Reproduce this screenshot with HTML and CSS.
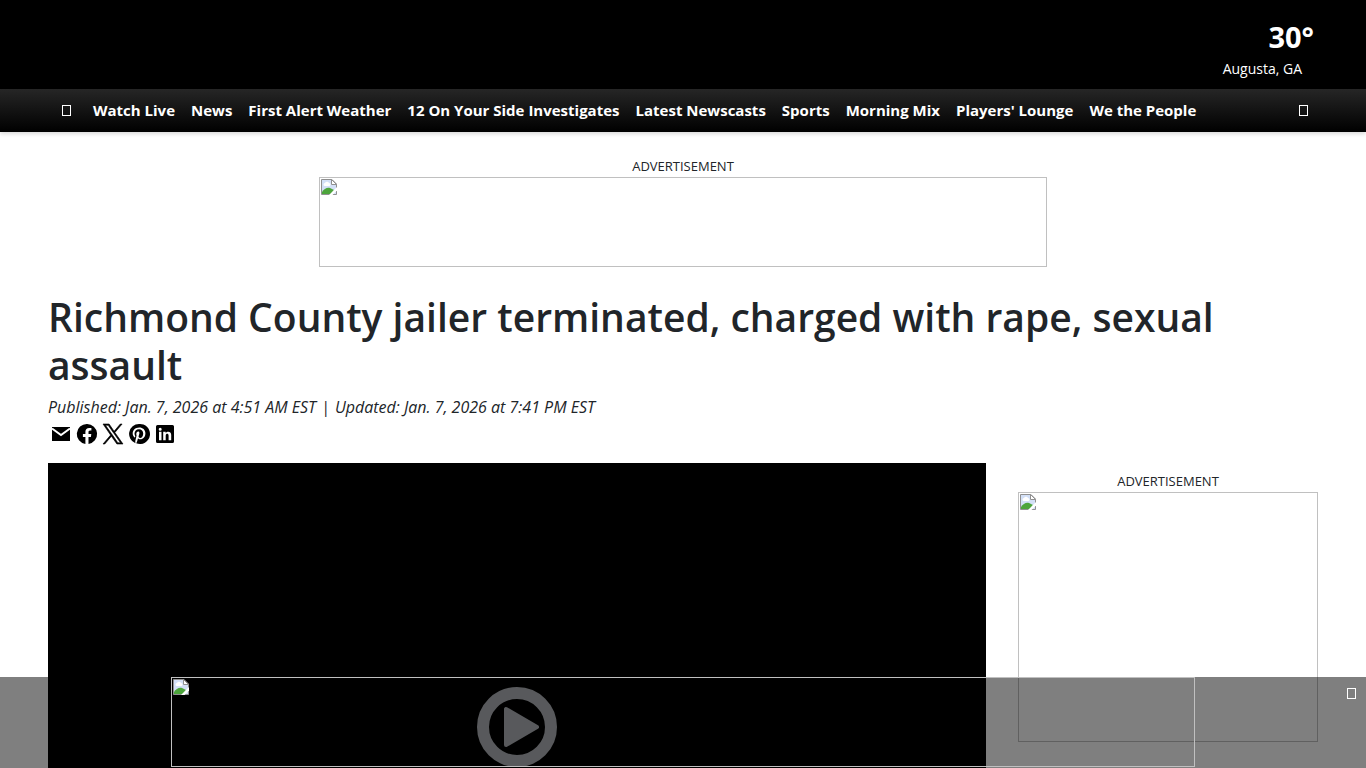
FILE: index.html
```
<!DOCTYPE html>
<html lang="en">
<head>
    <meta charset="UTF-8">
    <meta name="viewport" content="width=device-width, initial-scale=1.0">
    <title>Richmond County jailer terminated, charged with rape, sexual assault</title>
    <link rel="stylesheet" href="styles.css">
</head>
<body>
    <!-- Shared placeholder icon for ad slots -->
    <svg class="sprite" aria-hidden="true">
        <symbol id="broken" viewBox="0 0 16 16">
            <path d="M.5.5h10.500l4.500 4.500v10.500H.5z" fill="#d3e0f7"/>
            <path d="M4 7a1.500 1.500 0 0 1 0-3 2.200 2.200 0 0 1 4 0 1.500 1.500 0 0 1 0 3z" fill="#fff"/>
            <path d="M1 15v-2c2-3 5-5 8-4l4 2-3 4z" fill="#4da53c"/>
            <path d="M.5 15.500V.5h10.500l4.500 4.500v10.500z" fill="none" stroke="#909090"/>
            <path d="M10.500.5v5h5z" fill="#fff" stroke="#909090"/>
            <path d="M8 16l8-8v3.500L11.500 16z" fill="#fff"/>
        </symbol>
    </svg>

    <header class="masthead">
        <div class="weather">
            <div class="temp">30°</div>
            <div class="city">Augusta, GA</div>
        </div>
    </header>

    <nav class="navbar">
        <button class="icon-btn" aria-label="Menu"><span class="glyph"></span></button>
        <ul class="nav-links">
            <li><a href="#">Watch Live</a></li>
            <li><a href="#">News</a></li>
            <li><a href="#">First Alert Weather</a></li>
            <li><a href="#">12 On Your Side Investigates</a></li>
            <li><a href="#">Latest Newscasts</a></li>
            <li><a href="#">Sports</a></li>
            <li><a href="#">Morning Mix</a></li>
            <li><a href="#">Players' Lounge</a></li>
            <li><a href="#">We the People</a></li>
        </ul>
        <button class="icon-btn" aria-label="Search"><span class="glyph"></span></button>
    </nav>

    <main class="container">
        <div class="ad ad-top">
            <span class="ad-label">ADVERTISEMENT</span>
            <div class="ad-slot leaderboard"><svg class="broken"><use href="#broken"/></svg></div>
        </div>

        <h1>Richmond County jailer terminated, charged with rape, sexual assault</h1>
        <p class="dates"><span>Published: Jan. 7, 2026 at 4:51 AM EST</span><span>|</span><span>Updated: Jan. 7, 2026 at 7:41 PM EST</span></p>

        <div class="share">
            <a href="#" aria-label="Email">
                <svg viewBox="0 0 24 24"><path d="M3 5h18v14H3z"/><path d="M3 6.500l9 6.500 9-6.500" fill="none" stroke="#fff" stroke-width="2"/></svg>
            </a>
            <a href="#" aria-label="Facebook">
                <svg viewBox="0 0 24 24"><path d="M12 2a10 10 0 0 0-1.600 19.900v-7H7.900V12h2.500V9.800c0-2.500 1.500-3.900 3.800-3.900 1.100 0 2.200.2 2.200.2v2.500h-1.300c-1.200 0-1.600.8-1.600 1.600V12h2.800l-.4 2.900h-2.400v7A10 10 0 0 0 12 2z"/></svg>
            </a>
            <a href="#" aria-label="X">
                <svg viewBox="0 0 24 24"><path d="M13.900 10.500 21.100 2h-1.800L13.100 9.300 8.100 2H2l7.600 11.100L2 22h1.800l6.600-7.800L15.900 22H22zM11.500 13.100l-.8-1.100L4.500 3.300h2.700l5 7.100.8 1.100 6.500 9.300h-2.700z" stroke="#000" stroke-width=".6"/></svg>
            </a>
            <a href="#" aria-label="Pinterest">
                <svg viewBox="0 0 24 24"><path d="M12 2a10 10 0 0 0-3.600 19.300c-.1-.8-.2-2 0-2.900l1.200-5s-.3-.6-.3-1.500c0-1.400.8-2.400 1.800-2.400.9 0 1.300.6 1.300 1.400 0 .9-.5 2.100-.8 3.300-.2 1 .5 1.800 1.500 1.800 1.800 0 3.100-1.900 3.100-4.600 0-2.400-1.700-4.100-4.200-4.100-2.800 0-4.500 2.100-4.500 4.300 0 .9.300 1.800.7 2.300.1.1.1.200.1.300l-.3 1.100c0 .2-.1.200-.3.100-1.200-.6-2-2.400-2-3.900 0-3.100 2.300-6 6.600-6 3.400 0 6.100 2.400 6.100 5.700 0 3.400-2.100 6.100-5.100 6.100-1 0-1.900-.5-2.300-1.100l-.6 2.400c-.2.900-.8 1.900-1.200 2.600A10 10 0 1 0 12 2z"/></svg>
            </a>
            <a href="#" aria-label="LinkedIn">
                <svg viewBox="0 0 24 24"><path d="M4.500 3h15A1.500 1.500 0 0 1 21 4.500v15a1.500 1.500 0 0 1-1.500 1.500h-15A1.500 1.500 0 0 1 3 19.500v-15A1.500 1.500 0 0 1 4.500 3zM6 9.800v8.400h2.500V9.800zM7.200 5.700a1.500 1.500 0 1 0 0 3 1.500 1.500 0 0 0 0-3zM10.200 9.800v8.400h2.500v-4.500c0-2.400 2.900-2.500 2.900 0v4.500h2.600v-5.300c0-4-4.200-3.900-5.500-1.900V9.800z"/></svg>
            </a>
        </div>

        <div class="columns">
            <div class="video">
                <button class="play" aria-label="Play video">
                    <svg viewBox="0 0 80 80"><circle cx="40" cy="40" r="34" fill="none" stroke="#b0b3b8" stroke-width="12"/><path d="M29 22v36l31-18z" fill="#b0b3b8" stroke="#b0b3b8" stroke-width="4" stroke-linejoin="round"/></svg>
                </button>
            </div>
            <aside class="ad">
                <span class="ad-label">ADVERTISEMENT</span>
                <div class="ad-slot box"><svg class="broken"><use href="#broken"/></svg></div>
            </aside>
        </div>
    </main>

    <!-- Ad pinned to the bottom of the window -->
    <div class="sticky-ad">
        <div class="ad-slot banner"><svg class="broken"><use href="#broken"/></svg></div>
        <button class="icon-btn close" aria-label="Close ad"><span class="glyph"></span></button>
    </div>
</body>
</html>
```
FILE: styles.css
```
* {
    box-sizing: border-box;
}
html {
    scrollbar-width: none;
}
body {
    margin: 0;
    font-family: "Segoe UI", "Open Sans", "Noto Sans", sans-serif;
    font-size: 16px;
    line-height: 24px;
    color: #212529;
    background: #fff;
}
.sprite {
    display: none;
}
.masthead {
    display: flex;
    justify-content: flex-end;
    padding: 18px 52px 9px;
    background: #000;
    color: #fff;
}
.weather {
    text-align: right;
}
.temp {
    font-size: 29px;
    font-weight: bold;
    line-height: 38px;
}
.city {
    padding: 1px 12px 0 0;
    font-size: 14px;
    line-height: 23px;
}
.navbar {
    display: flex;
    align-items: center;
    height: 43px;
    padding: 0 53px 0 57px;
    background: linear-gradient(#262626, #000);
    box-shadow: 0 2px 4px rgba(0, 0, 0, 0.15);
}
.nav-links {
    display: flex;
    flex: 1;
    gap: 16px;
    margin: 0;
    padding: 0 0 2px 17px;
    list-style: none;
    white-space: nowrap;
}
.nav-links a {
    color: #fff;
    font-size: 15px;
    font-weight: bold;
    text-decoration: none;
}
.icon-btn {
    display: flex;
    padding: 5px;
    border: 0;
    background: none;
    cursor: pointer;
}
.glyph {
    width: 9px;
    height: 11px;
    border: 1px solid #fff;
}
.container {
    padding: 24px 48px;
}
.ad {
    display: flex;
    flex-direction: column;
    align-items: center;
}
.ad-top {
    margin-bottom: 26px;
}
.ad-label {
    font-size: 13px;
    line-height: 21px;
}
.ad-slot {
    max-width: 100%;
    padding: 1px;
    border: 1px solid #c0c0c0;
}
.broken {
    display: block;
    width: 16px;
    height: 16px;
}
.leaderboard {
    width: 728px;
    height: 90px;
}
.box {
    width: 300px;
    height: 250px;
}
.banner {
    width: 1024px;
    height: 90px;
}
h1 {
    margin: 0 0 6px;
    font-size: 39px;
    font-weight: 600;
    line-height: 48px;
}
.dates {
    display: flex;
    flex-wrap: wrap;
    gap: 0 5px;
    margin: 0 0 3px;
    font-style: italic;
    font-size: 16px;
}
.share {
    display: flex;
    gap: 2px;
    padding-left: 1px;
}
.share a {
    display: block;
    height: 24px;
}
.share svg {
    display: block;
    width: 24px;
    height: 24px;
}
.columns {
    display: grid;
    grid-template-columns: 1fr 300px;
    gap: 32px;
    align-items: start;
    margin-top: 17px;
}
.columns .ad {
    padding-top: 8px;
}
.video {
    display: flex;
    align-items: center;
    justify-content: center;
    aspect-ratio: 16 / 9;
    background: #000;
}
.play {
    width: 80px;
    height: 80px;
    padding: 0;
    border: 0;
    background: none;
    cursor: pointer;
}
.play svg {
    display: block;
}
.sticky-ad {
    position: fixed;
    right: 0;
    bottom: 0;
    left: 0;
    display: flex;
    justify-content: center;
    padding-bottom: 1px;
    background: rgba(0, 0, 0, 0.5);
}
.close {
    position: absolute;
    top: 6px;
    right: 5px;
}
```
